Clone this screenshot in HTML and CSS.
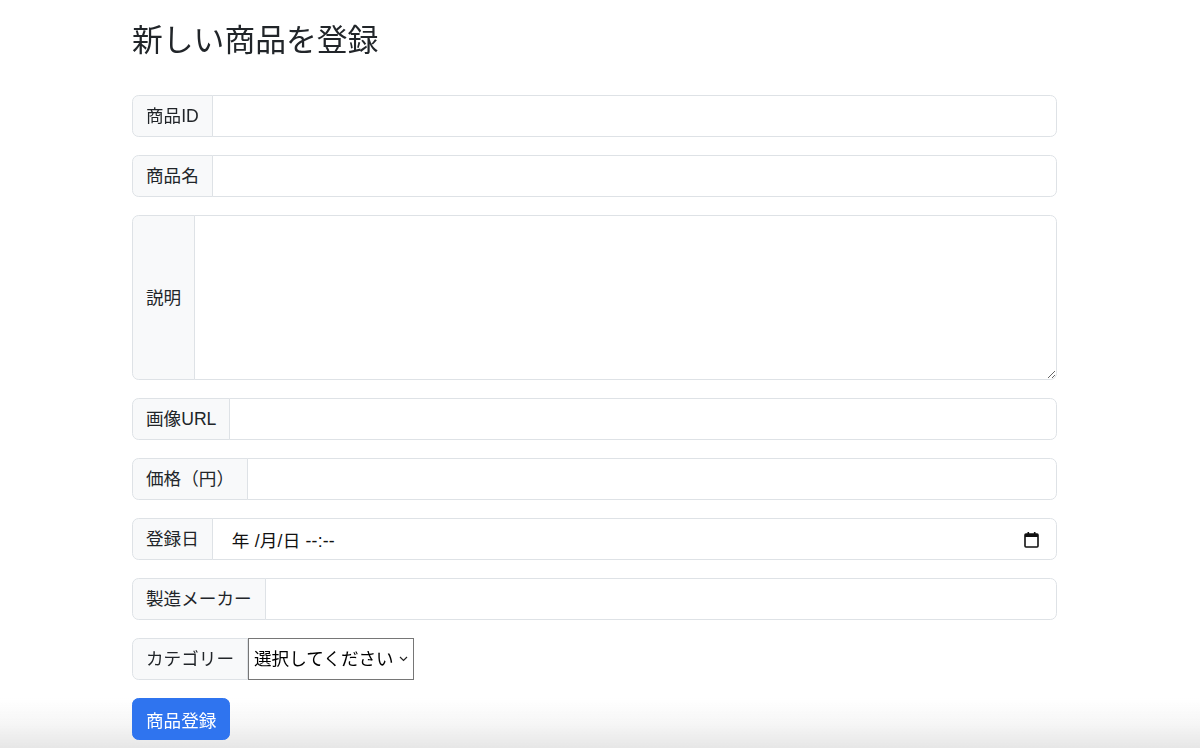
FILE: index.html
```html
<!DOCTYPE html>
<html lang="ja">
<head>
<meta charset="utf-8">
<title>新しい商品を登録</title>
<link rel="stylesheet" href="styles.css">
</head>
<body>
<div class="bottom-fade"></div>
<main class="container">
  <h3 class="title">新しい商品を登録</h3>
  <form class="product-form">
    <div class="input-group">
      <span class="input-group-text">商品ID</span>
      <input class="form-control" type="text">
    </div>
    <div class="input-group">
      <span class="input-group-text">商品名</span>
      <input class="form-control" type="text">
    </div>
    <div class="input-group input-group-tall">
      <span class="input-group-text">説明</span>
      <textarea class="form-control textarea"></textarea>
    </div>
    <div class="input-group">
      <span class="input-group-text">画像URL</span>
      <input class="form-control" type="text">
    </div>
    <div class="input-group">
      <span class="input-group-text">価格（円）</span>
      <input class="form-control" type="text">
    </div>
    <div class="input-group">
      <span class="input-group-text">登録日</span>
      <div class="form-control date-control">
        <span class="date-text">年 /月/日 --:--</span>
        <svg class="cal-icon" width="15" height="17" viewBox="0 0 15 17" aria-hidden="true">
          <rect x="1" y="3" width="13" height="13" rx="1" fill="none" stroke="#111" stroke-width="1.6"/>
          <rect x="1" y="3" width="13" height="3" fill="#111"/>
          <rect x="3.5" y="1" width="1.6" height="3" fill="#111"/>
          <rect x="9.9" y="1" width="1.6" height="3" fill="#111"/>
        </svg>
      </div>
    </div>
    <div class="input-group">
      <span class="input-group-text">製造メーカー</span>
      <input class="form-control" type="text">
    </div>
    <div class="input-group input-group-inline">
      <span class="input-group-text">カテゴリー</span>
      <span class="select-wrap">
        <select class="plain-select">
          <option>選択してください</option>
        </select>
        <svg class="chevron" width="9" height="6" viewBox="0 0 9 6" aria-hidden="true">
          <path d="M1 1 L4.5 4.5 L8 1" fill="none" stroke="#222" stroke-width="1.2"/>
        </svg>
      </span>
    </div>
    <button class="btn-primary" type="button">商品登録</button>
  </form>
</main>
</body>
</html>
```

FILE: styles.css
```css
* { box-sizing: border-box; }

html, body {
  margin: 0;
  padding: 0;
}

html {
  background: #fff;
}

body {
  font-family: "Liberation Sans", "Noto Sans CJK JP", sans-serif;
  color: #212529;
  font-size: 17.6px;
}

.container {
  position: relative;
  width: 925px;
  margin-left: 132px;
  padding-top: 22px;
}

.title {
  margin: 0 0 36px 0;
  font-size: 30.8px;
  line-height: 37px;
  font-weight: 400;
  color: #212529;
}

.product-form {
  display: flex;
  flex-direction: column;
}

.input-group {
  display: flex;
  align-items: stretch;
  height: 42px;
  margin-bottom: 18px;
}

.input-group-tall {
  height: 165px;
}

.input-group-inline {
  width: max-content;
}

.input-group-text {
  display: flex;
  align-items: center;
  padding: 0 13px;
  font-size: 17.6px;
  line-height: 26px;
  color: #212529;
  background: #f8f9fa;
  border: 1px solid #dee2e6;
  border-radius: 6.6px 0 0 6.6px;
  white-space: nowrap;
}

.form-control {
  flex: 1;
  min-width: 0;
  margin-left: -1px;
  padding: 6px 13px;
  font-family: inherit;
  font-size: 17.6px;
  color: #212529;
  background: #fff;
  border: 1px solid #dee2e6;
  border-radius: 0 6.6px 6.6px 0;
  outline: none;
}

.textarea {
  resize: vertical;
  height: 100%;
}

.date-control {
  display: flex;
  align-items: center;
  justify-content: space-between;
  padding: 0 17px 0 19px;
}

.date-text {
  color: #111;
  font-size: 17.6px;
  letter-spacing: 0.2px;
}

.cal-icon {
  display: block;
}

.select-wrap {
  position: relative;
  display: flex;
}

.plain-select {
  appearance: none;
  -webkit-appearance: none;
  height: 42px;
  width: 166px;
  margin: 0;
  padding: 0 18px 0 5px;
  font-family: "Liberation Sans", "Noto Sans CJK JP", sans-serif;
  font-size: 17.6px;
  color: #000;
  background: #fff;
  border: 1px solid #767676;
  border-radius: 0;
}

.chevron {
  position: absolute;
  right: 6px;
  top: 18px;
  pointer-events: none;
}

.btn-primary {
  align-self: flex-start;
  height: 42px;
  padding: 0 13px;
  font-family: inherit;
  font-size: 17.6px;
  color: #fff;
  background: #2f74ef;
  border: 1px solid #2f74ef;
  border-radius: 6.6px;
}

.bottom-fade {
  position: fixed;
  left: 0;
  right: 0;
  bottom: 0;
  height: 50px;
  z-index: 0;
  pointer-events: none;
  background: linear-gradient(to bottom, rgba(230,230,230,0) 0%, rgba(230,230,230,0.35) 50%, rgba(228,228,228,0.9) 100%);
}
```
